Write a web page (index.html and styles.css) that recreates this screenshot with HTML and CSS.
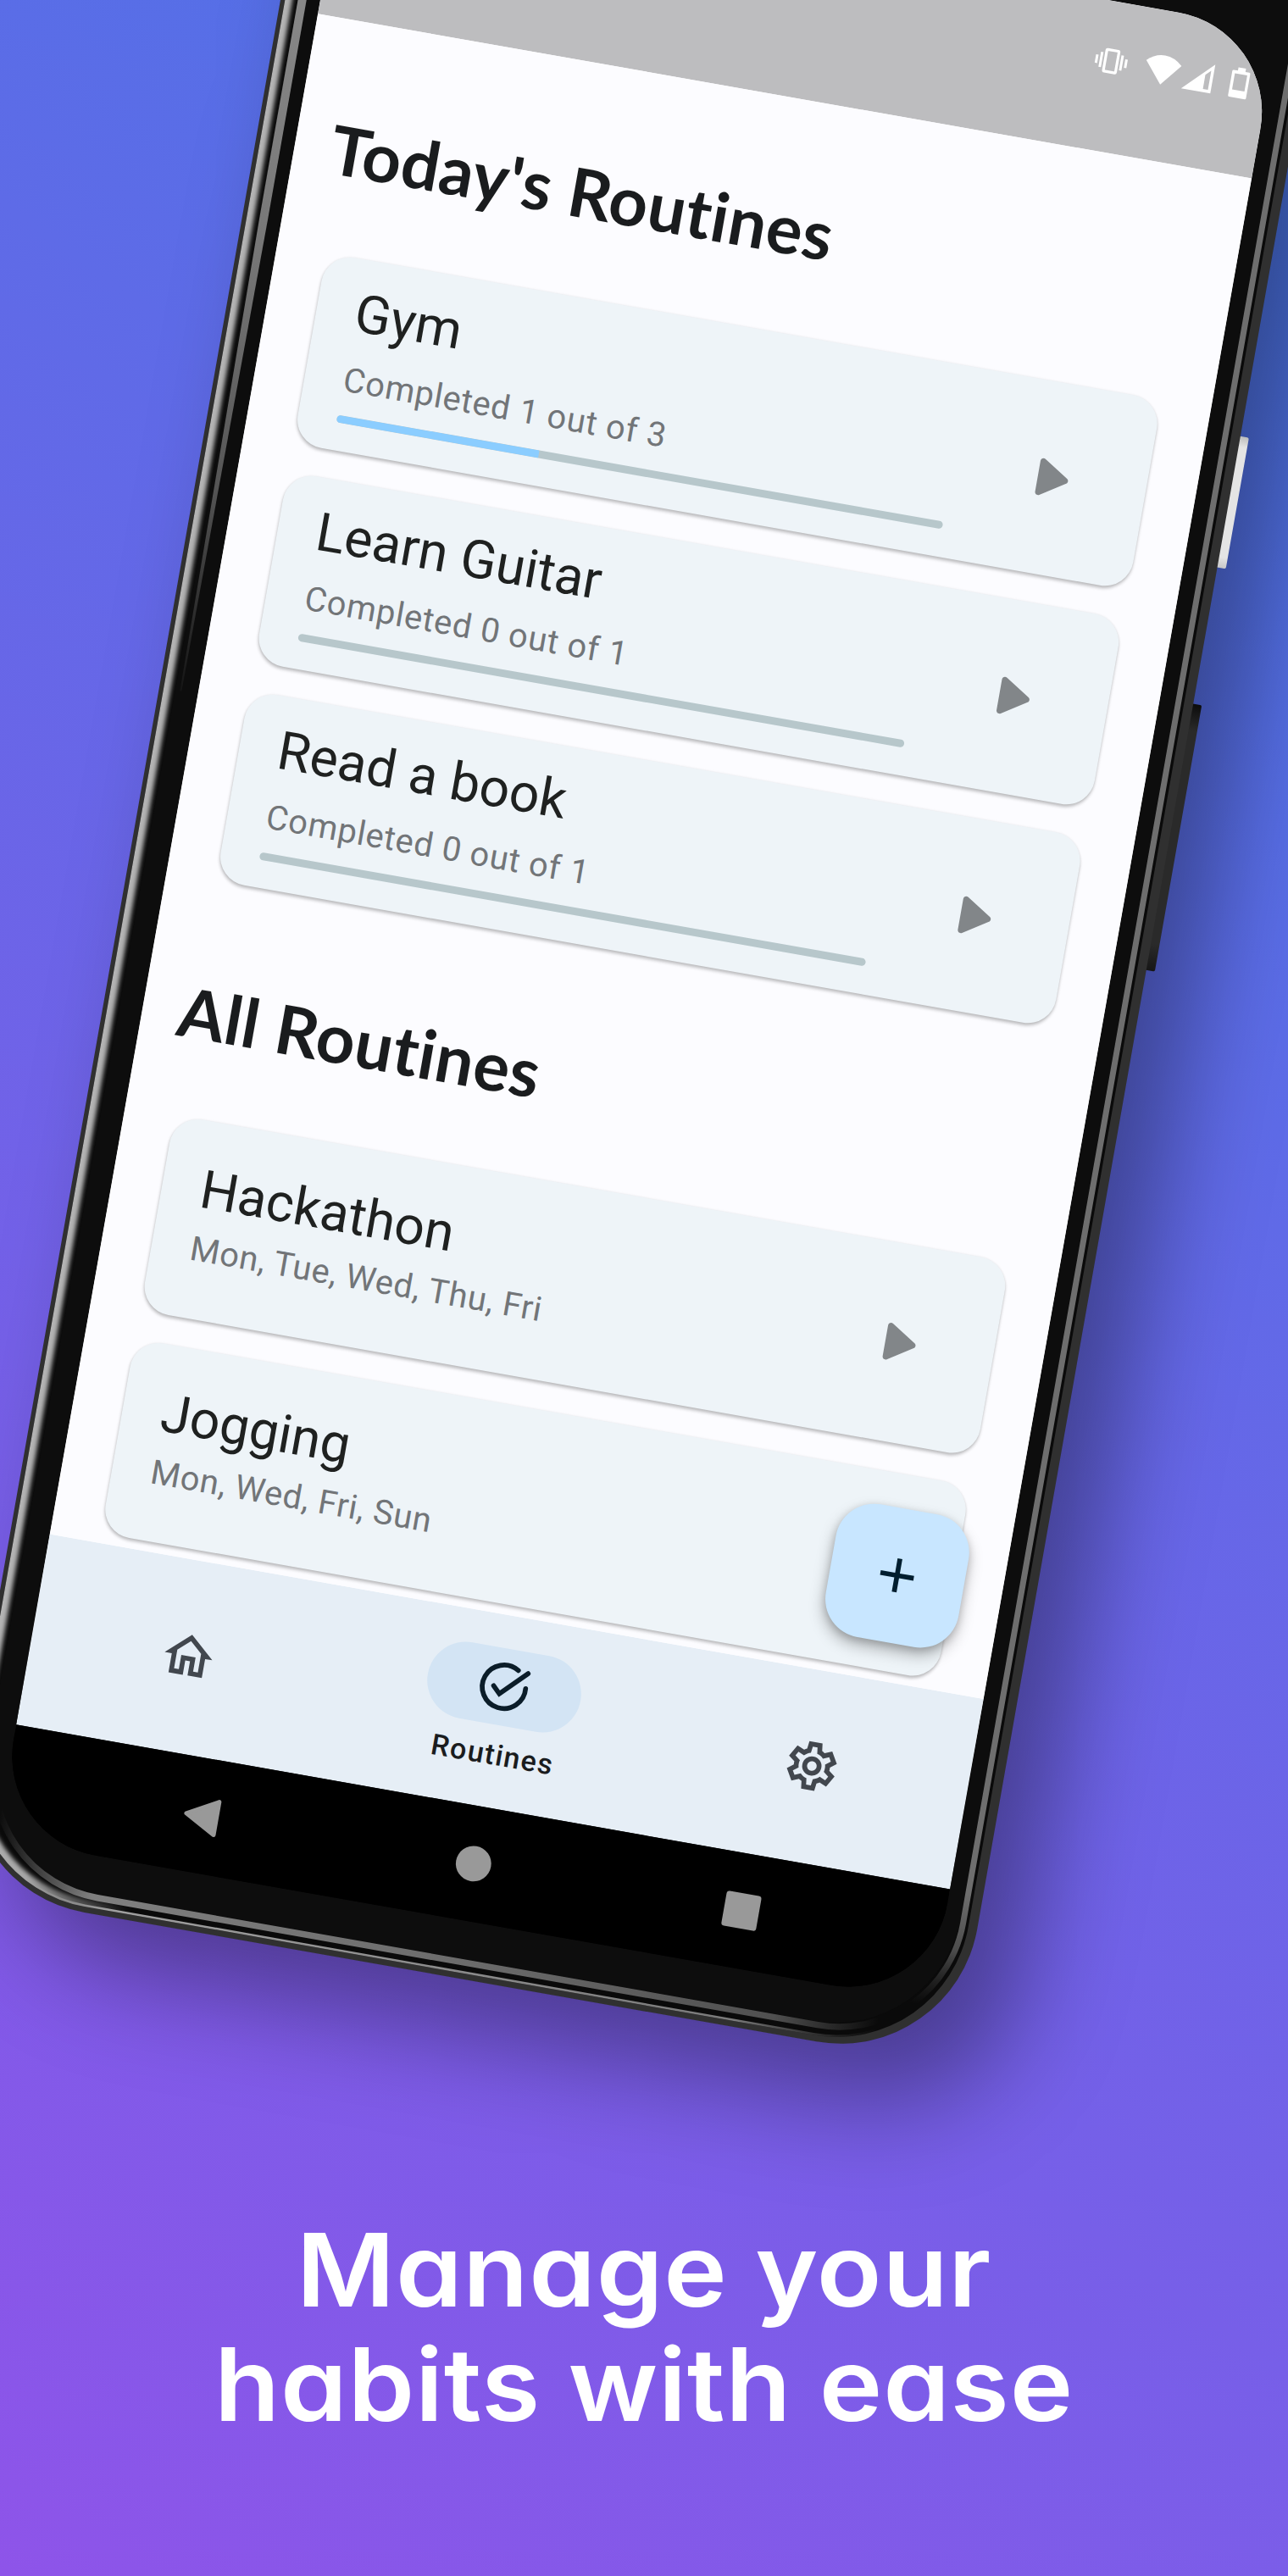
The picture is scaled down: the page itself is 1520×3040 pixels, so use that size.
FILE: index.html
```html
<!DOCTYPE html>
<html lang="en">
<head>
<meta charset="utf-8">
<title>Manage your habits with ease</title>
<link rel="stylesheet" href="styles.css">
</head>
<body>
<svg class="defs" width="0" height="0" aria-hidden="true">
  <symbol id="play" viewBox="0 0 24 24"><path d="M8 6.82v10.36c0 .79.87 1.27 1.54.84l8.14-5.18c.62-.39.62-1.29 0-1.69L9.54 5.98C8.87 5.55 8 6.03 8 6.82z"/></symbol>
</svg>
<main class="poster">
  <div class="phone">
    <div class="phone-shadow"></div>
    <svg class="frame" viewBox="-60 -400 1260 2700" aria-hidden="true">
      <defs>
        <linearGradient id="gEdge" gradientUnits="userSpaceOnUse" x1="-41" y1="0" x2="170" y2="0">
          <stop offset="0" stop-color="#b4b4b4"/><stop offset=".4" stop-color="#a8a8a8"/><stop offset="1" stop-color="#999" stop-opacity="0"/>
        </linearGradient>
        <linearGradient id="gRim" gradientUnits="userSpaceOnUse" x1="0" y1="0" x2="1119" y2="0">
          <stop offset="0" stop-color="#a0a0a0" stop-opacity="0"/><stop offset=".13" stop-color="#a0a0a0"/><stop offset=".8" stop-color="#7a7a7a"/><stop offset=".95" stop-color="#555" stop-opacity="0"/>
        </linearGradient>
        <linearGradient id="gBottom" gradientUnits="userSpaceOnUse" x1="0" y1="0" x2="1119" y2="0">
          <stop offset="0" stop-color="#7f7f7f" stop-opacity="0"/><stop offset=".11" stop-color="#7f7f7f"/><stop offset=".5" stop-color="#6c6c6c"/><stop offset=".84" stop-color="#505050"/><stop offset=".95" stop-color="#505050" stop-opacity="0"/>
        </linearGradient>
        <linearGradient id="gRight" gradientUnits="userSpaceOnUse" x1="0" y1="2050" x2="0" y2="2190">
          <stop offset="0" stop-color="#6e6e6e"/><stop offset=".5" stop-color="#4c4c4c"/><stop offset="1" stop-color="#333" stop-opacity="0"/>
        </linearGradient>
        <linearGradient id="gLeft" gradientUnits="userSpaceOnUse" x1="0" y1="0" x2="0" y2="815">
          <stop offset="0" stop-color="#878787"/><stop offset=".35" stop-color="#777"/><stop offset=".7" stop-color="#555"/><stop offset="1" stop-color="#151515"/>
        </linearGradient>
        <linearGradient id="gPower" x1="0" y1="0" x2="0" y2="1">
          <stop offset="0" stop-color="#bdbdbd"/><stop offset=".08" stop-color="#e4e4e4"/><stop offset=".92" stop-color="#e4e4e4"/><stop offset="1" stop-color="#c8c8c8"/>
        </linearGradient>
        <linearGradient id="gVolume" x1="0" y1="0" x2="0" y2="1">
          <stop offset="0" stop-color="#0c0c0c"/><stop offset=".1" stop-color="#2a2a2a"/><stop offset=".9" stop-color="#2a2a2a"/><stop offset="1" stop-color="#161616"/>
        </linearGradient>
        <filter id="soft" x="-5%" y="-5%" width="110%" height="110%"><feGaussianBlur stdDeviation="2.6"/></filter>
        <clipPath id="inner"><rect x="-41" y="-600" width="1189" height="2847.5" rx="158"/></clipPath>
      </defs>
      <rect x="1155" y="302" width="14" height="157" rx="2" fill="url(#gPower)"/>
      <rect x="1155" y="622.5" width="14" height="319" rx="2" fill="url(#gVolume)"/>
      <rect x="-46.3" y="-600" width="1205.1" height="2854.5" rx="164" fill="#303030"/>
      <rect x="-41" y="-600" width="1189" height="2847.5" rx="158" fill="#0a0a0a"/>
      <g clip-path="url(#inner)">
        <path d="M-41 -500V2089.5A158 158 0 0 0 117 2247.5H200" fill="none" stroke="url(#gEdge)" stroke-width="17" filter="url(#soft)"/>
        <path d="M-41 2089.5A158 158 0 0 0 117 2247.5H990A158 158 0 0 0 1148 2089.5" fill="none" stroke="url(#gRim)" stroke-width="5"/>
      </g>
      <path d="M-27 -500V2080A151 151 0 0 0 124 2231H987A151 151 0 0 0 1137.7 2080V-500z" fill="#0d0d0d"/>
      <path d="M-26 -400H-16V250L-19.5 815L-21.5 815L-26 250z" fill="url(#gLeft)"/>
      <path d="M-18 2086.8A148 148 0 0 0 130 2234.8H993A148 148 0 0 0 1141.2 2086.8" fill="none" stroke="url(#gBottom)" stroke-width="7.5"/>
      <path d="M1141.2 -400V2086.8A148 148 0 0 1 993 2234.8" fill="none" stroke="url(#gRight)" stroke-width="7"/>
    </svg>

    <div class="screen">
      <header class="status-bar">
        <svg class="status-icons" viewBox="924 -134 184 56" aria-hidden="true">
          <g fill="none" stroke="#fff">
            <rect x="924.5" y="-120.5" width="14.5" height="26" rx="1" stroke-width="3.2"/>
            <path d="M919.5 -116.5V-98.5M944 -116.5V-98.5" stroke-width="3"/>
            <path d="M914.3 -112.5V-102.5M949.3 -112.5V-102.5" stroke-width="3"/>
          </g>
          <path d="M993.4 -90.5L972.3 -116.2Q982 -125.2 993.4 -125.2T1014.5 -116.2z" fill="#fff"/>
          <path fill-rule="evenodd" d="M1018.5 -90.3L1053.5 -125V-90.3zM1044 -94H1050V-117L1044 -111z" fill="#fff"/>
          <path fill-rule="evenodd" d="M1081 -126.5h9v4h4.5q1.5 0 1.5 1.5v29q0 1.5-1.5 1.5h-18.5q-1.5 0-1.5-1.5v-29q0-1.5 1.5-1.5h5zM1078 -118.8v19.3h14.8v-19.3z" fill="#fff"/>
        </svg>
      </header>

      <section class="content">
        <h1 class="heading">Today's Routines</h1>
        <div class="today">
          <article class="card">
            <div class="card-body">
              <h2 class="title">Gym</h2>
              <p class="detail">Completed 1 out of 3</p>
              <div class="progress"><div class="progress-fill" style="width:33.33%"></div></div>
            </div>
            <svg class="play"><use href="#play"/></svg>
          </article>
          <article class="card">
            <div class="card-body">
              <h2 class="title">Learn Guitar</h2>
              <p class="detail">Completed 0 out of 1</p>
              <div class="progress"></div>
            </div>
            <svg class="play"><use href="#play"/></svg>
          </article>
          <article class="card">
            <div class="card-body">
              <h2 class="title">Read a book</h2>
              <p class="detail">Completed 0 out of 1</p>
              <div class="progress"></div>
            </div>
            <svg class="play"><use href="#play"/></svg>
          </article>
        </div>
        <h1 class="heading heading-all">All Routines</h1>
        <div class="all">
          <article class="card card-days">
            <div class="card-body">
              <h2 class="title">Hackathon</h2>
              <p class="detail">Mon, Tue, Wed, Thu, Fri</p>
            </div>
            <svg class="play"><use href="#play"/></svg>
          </article>
          <article class="card card-days">
            <div class="card-body">
              <h2 class="title">Jogging</h2>
              <p class="detail">Mon, Wed, Fri, Sun</p>
            </div>
          </article>
        </div>
        <button class="fab" aria-label="Add"><svg viewBox="0 0 24 24"><path d="M19 13h-6v6h-2v-6H5v-2h6V5h2v6h6v2z"/></svg></button>
      </section>

      <nav class="tabs">
        <div class="tab">
          <svg viewBox="0 0 24 24"><path d="M12 5.69l5 4.5V18h-2v-6H9v6H7v-7.81l5-4.5M12 3L2 12h3v8h6v-6h2v6h6v-8h3L12 3z"/></svg>
        </div>
        <div class="tab tab-active">
          <div class="pill">
            <svg viewBox="0 0 24 24"><path d="M7.7 12.3L10.59 15.19L20.9 4.9M16.7 4.33A9 9 0 1 0 20.95 11.2" fill="none" stroke="#0b1d29" stroke-width="2" stroke-linecap="round"/></svg>
          </div>
          <span class="tab-label">Routines</span>
        </div>
        <div class="tab">
          <svg viewBox="0 0 24 24"><path fill-rule="evenodd" d="M9.25 22l-.4-3.2q-.33-.12-.61-.3-.29-.17-.56-.37L4.7 19.38l-2.75-4.75 2.58-1.95q-.03-.18-.03-.34v-.67q0-.17.03-.35L1.95 9.38 4.7 4.63 7.68 5.88q.27-.2.57-.38.3-.17.6-.3L9.25 2h5.5l.4 3.2q.33.13.61.3.29.18.56.38l2.98-1.25 2.75 4.75-2.58 1.94q.03.18.03.35v.67q0 .16-.05.34l2.57 1.95-2.75 4.75-2.95-1.25q-.27.2-.57.37-.3.18-.6.3l-.4 3.2zM11 20h1.98l.35-2.65q.77-.2 1.43-.59.67-.38 1.22-.94l2.47 1.03.98-1.7-2.15-1.63q.12-.35.17-.73.05-.39.05-.79t-.05-.79q-.05-.39-.17-.74l2.15-1.62-.98-1.7-2.47 1.05q-.55-.58-1.22-.97-.66-.38-1.43-.58L13 4h-1.98l-.35 2.65q-.77.2-1.43.59-.67.38-1.22.94L5.55 7.15l-.98 1.7 2.15 1.6q-.12.38-.17.75-.05.38-.05.8 0 .4.05.78.05.37.17.74l-2.15 1.63.98 1.7 2.47-1.05q.55.57 1.22.96.66.39 1.43.59zM12 8a4 4 0 1 0 0 8 4 4 0 0 0 0-8zm0 2a2 2 0 1 1 0 4 2 2 0 0 1 0-4z"/></svg>
        </div>
      </nav>

      <footer class="system-bar">
        <svg viewBox="0 0 60 60"><path d="M8 30.3L44 10.5V50z" fill="#999" stroke="#999" stroke-width="5" stroke-linejoin="round"/></svg>
        <svg viewBox="0 0 60 60"><circle cx="30" cy="30" r="20.9" fill="#999"/></svg>
        <svg viewBox="0 0 60 60"><rect x="9.2" y="9.2" width="41.6" height="41.6" rx="3.5" fill="#999"/></svg>
      </footer>
    </div>
  </div>
  <p class="tagline">Manage your<br>habits with ease</p>
</main>
</body>
</html>
```
FILE: styles.css
```css
* { box-sizing: border-box; }

body { margin: 0; }

h1, h2, p { margin: 0; font-weight: 400; }

.defs { position: absolute; }

.poster {
  position: relative;
  width: 1520px;
  height: 3040px;
  overflow: hidden;
  display: flex;
  flex-direction: column;
  justify-content: flex-end;
  background: linear-gradient(216deg, #4776e6, #8e54e9);
  font-family: Roboto, sans-serif;
}

/* Phone, tilted over the backdrop */
.phone {
  position: absolute;
  left: 405.8px;
  top: -158.7px;
  width: 1119.3px;
  height: 2364.3px;
  transform: rotate(10deg);
  transform-origin: 0 0;
}

.phone-shadow {
  position: absolute;
  inset: -200px -39px -68px -46px;
  border-radius: 164px;
  box-shadow: 62px 62px 120px rgba(0, 0, 0, .37);
}

.frame {
  position: absolute;
  left: -60px;
  top: -221.7px;
  width: 1260px;
  height: 2700px;
}

.screen {
  position: relative;
  height: 100%;
  display: flex;
  flex-direction: column;
  overflow: hidden;
  border-radius: 119px;
  background: linear-gradient(#fcfcff 85%, #000 95%);
}

.status-bar {
  height: 178.3px;
  display: flex;
  justify-content: flex-end;
  padding: 44.3px 11.3px 0 0;
  background: #bdbdbf;
}

.status-icons { width: 184px; height: 56px; overflow: visible; }

.content {
  position: relative;
  height: 1821.4px;
  overflow: hidden;
  padding: 101.8px 59px 0;
  background: #fcfcff;
}

.heading {
  margin-left: -16px;
  font: 700 80px/100px Lato, sans-serif;
  font-variant-ligatures: none;
  letter-spacing: .4px;
  color: #1a1c1e;
  white-space: nowrap;
}

.heading-all { margin-top: 106.6px; }

.today, .all { display: flex; flex-direction: column; gap: 34.2px; margin-top: 73.9px; }

.card {
  height: 228px;
  display: flex;
  align-items: center;
  justify-content: space-between;
  padding: 0 72.2px 0 46px;
  border-radius: 34px;
  background: #eef4f8;
  box-shadow: 0 3px 4px rgba(0, 0, 0, .24), 0 0 3px rgba(0, 0, 0, .08);
}

.card-body { align-self: flex-start; width: 726px; padding-top: 26.9px; }

.title { font-size: 62.7px; line-height: 74px; color: #1f2120; }

.detail {
  margin-top: 18.9px;
  font-size: 39.9px;
  line-height: 48px;
  letter-spacing: .7px;
  color: #727578;
}

.progress {
  height: 8.6px;
  margin-top: 18.3px;
  overflow: hidden;
  border-radius: 4.3px;
  background: #b7c7cb;
}

.progress-fill { height: 100%; background: #8bcdff; }

.play { width: 85.5px; height: 85.5px; fill: #828689; }

.card-days { height: 233.7px; }
.card-days .card-body { padding-top: 44.1px; }
.card-days .detail { margin-top: 10.5px; }

.fab {
  position: absolute;
  right: 46px;
  bottom: 45.6px;
  width: 159.6px;
  height: 159.6px;
  display: grid;
  place-items: center;
  padding: 0;
  border: 0;
  border-radius: 45.6px;
  background: #c8e6ff;
  box-shadow: 0 9px 18px rgba(0, 0, 0, .28), 0 3px 10px rgba(0, 0, 0, .16);
}

.fab svg { width: 68.4px; height: 68.4px; fill: #001e2f; }

.tabs {
  height: 228px;
  display: grid;
  grid-template-columns: repeat(3, 1fr);
  background: #e6eef6;
}

.tab {
  display: flex;
  flex-direction: column;
  align-items: center;
  justify-content: center;
  gap: 12.4px;
}

.tab svg { width: 68.4px; height: 68.4px; fill: #42474e; }

.pill {
  width: 183px;
  height: 91.2px;
  display: grid;
  place-items: center;
  border-radius: 45.6px;
  background: #d3e4f4;
}

.tab-label {
  font-size: 34.2px;
  font-weight: 500;
  line-height: 46px;
  letter-spacing: 1.43px;
  color: #1a1c1e;
}

.system-bar {
  flex: 1;
  display: flex;
  align-items: center;
  justify-content: center;
  gap: 261.8px;
  background: #000;
}

.system-bar svg { width: 60px; height: 60px; }

.tagline {
  padding-bottom: 157.5px;
  text-align: center;
  font: 600 119px/135.3px Inter, sans-serif;
  font-feature-settings: "cv11";
  letter-spacing: .7px;
  transform: scaleX(1.06);
  color: #fff;
}
```
